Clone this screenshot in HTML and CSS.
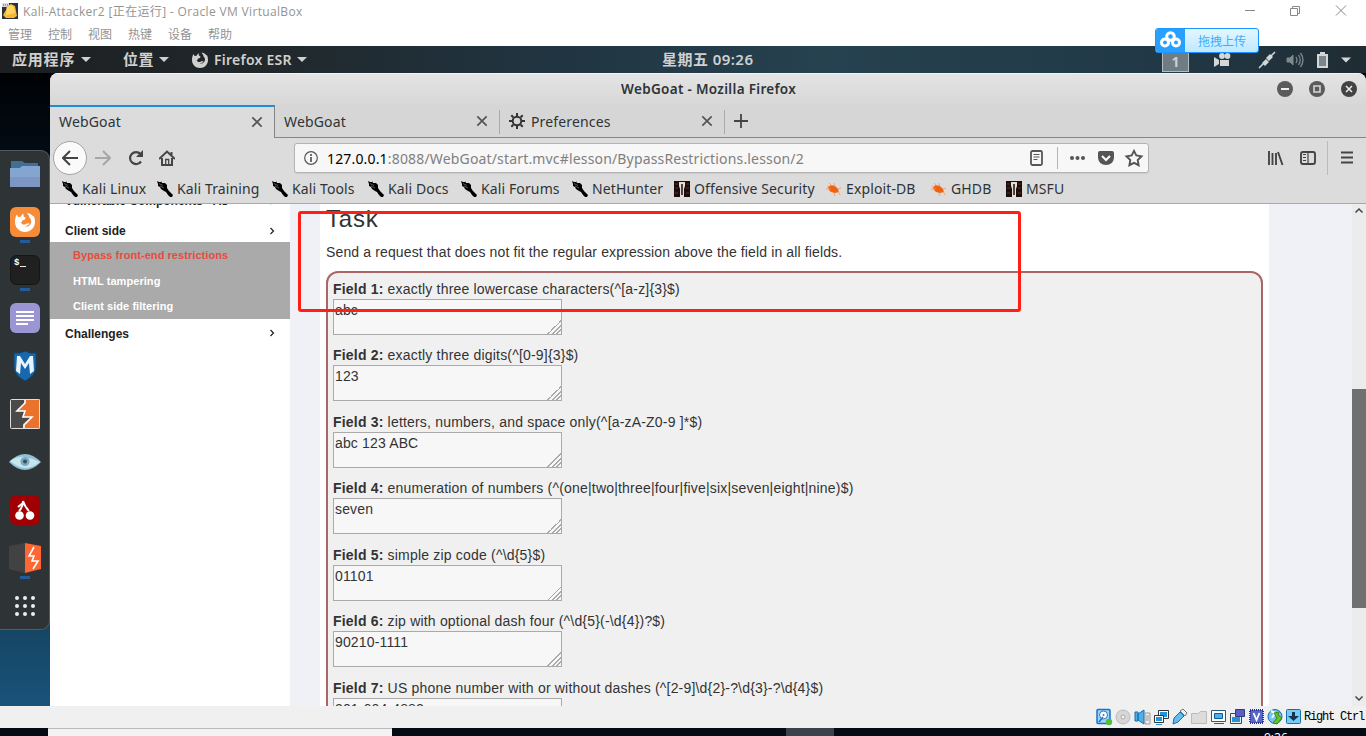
FILE: index.html
```
<!DOCTYPE html>
<html lang="zh-CN">
<head>
<meta charset="utf-8">
<title>Kali-Attacker2 [正在运行] - Oracle VM VirtualBox</title>
<link rel="stylesheet" href="styles.css">
</head>
<body>
<svg class="defs" width="0" height="0">
  <symbol id="dragon" viewBox="0 0 16 16"><path d="M0 0l2 1h2V0l1 2h3l2 2v3l2 3 4 4-1 2h-2l-2-2-2-3-2-1-3-2-1-2-2-1V5L1 3z"/><path d="M2 2.500l4 2M3 5l4 2" stroke="#999" stroke-width=".6"/></symbol>
  <symbol id="offsec" viewBox="0 0 16 16"><path d="M0 0h16v16H0z" fill="#1c0d0d"/><path d="M1 3h3M1 7h3M1 12h3M12 3h3M12 7h3M12 12h3" stroke="#4a2420" stroke-width="1.5"/><path d="M5 1h6v4l-1 3v8H6V8L5 5z" fill="#e6ddd4"/><path d="M8 3v11" stroke="#18100f" stroke-width="1.500"/></symbol>
  <symbol id="bug" viewBox="0 0 16 16"><path d="M2 6l3-2 4 1 3 3 1 3-4 1-4-1-2-2z" fill="#ee6210"/><path d="M0 8l5 0M6 5L3 2M9 6L8 2M12 8l3-1M12 10l2 4M8 12l1 3M1 5l3 1" stroke="#f2985e" stroke-width=".8" fill="none"/></symbol>
  <symbol id="close" viewBox="0 0 12 12"><path d="M2 2l8 8M10 2l-8 8" stroke="#555" stroke-width="1.500" fill="none"/></symbol>
  <symbol id="chev" viewBox="0 0 8 8"><path d="M2.5 1l3 3-3 3" stroke="#222" stroke-width="1.2" fill="none"/></symbol>
  <symbol id="swirl" viewBox="0 0 16 16"><path d="M1.500 2l1 2 2-.3L6.500 1l.5 2.500 1.500 1-.5 1.500-2 .5L5.500 8 4.500 8l1.500 2h2l1.500-.8 2-.2c-.5 2-3 2.500-4.500 2 3 1.500 6-.5 6-3.500 0-1.500-1-3-2-3.500l.5-.7C10.500 2 10 1.500 9.500.5c3 .5 4.500 2 5 3l.5-.5c.7 1.500 1 3.500 1 5 0 4.500-3.500 8-8 8s-8-3.500-8-8c0-2.500.5-4.500 1.500-6z"/></symbol>
</svg>

<header class="host-title">
  <svg class="host-logo" width="16" height="16" viewBox="0 0 16 16"><path d="M0 0h16v16H0z" fill="#293041"/><path d="M0 0h7v4H0z" fill="#d9dde4"/><path d="M1 2h5" stroke="#555" stroke-dasharray="1 1"/><path d="M5 3l4-2 4 2 2 10-3 2H4l-3-3 3-5z" fill="#f7b731"/><path d="M5 4l4-2 3 2 1 6-9 2z" fill="#ffd662"/></svg>
  <span class="host-name">Kali-Attacker2 [正在运行] - Oracle VM VirtualBox</span>
  <svg class="host-controls" width="103" height="14" viewBox="0 0 103 14"><path d="M0 7.500h10M45.500 5.500h7v7h-7zM47.500 5V3.500h7v7H53M91 2.500l10 10M101 2.500l-10 10" fill="none" stroke="#888"/></svg>
</header>
<nav class="host-menu"><span>管理</span><span>控制</span><span>视图</span><span>热键</span><span>设备</span><span>帮助</span></nav>

<div class="upload-badge">
  <svg width="29" height="24" viewBox="0 0 29 24"><path d="M0 0h29v24H0z" fill="#27a0ff"/><g fill="none" stroke="#fff" stroke-width="3"><circle cx="14.500" cy="7.500" r="3.800"/><circle cx="9" cy="13.500" r="3.500"/><circle cx="20" cy="13.500" r="3.500"/></g></svg>
  <span>拖拽上传</span>
</div>

<div class="panel">
  <span class="panel-apps">应用程序</span><i class="down"></i>
  <span class="panel-places">位置</span><i class="down"></i>
  <svg class="panel-fox" width="16" height="16" fill="#d0d0cf"><use href="#swirl"/></svg>
  <span class="panel-ff">Firefox ESR</span><i class="down"></i>
  <span class="panel-clock">星期五 09:26</span>
  <span class="workspace">1</span>
  <svg class="tray" width="140" height="20" viewBox="0 0 140 20" fill="#d3d7d8"><path d="M0 7l5 3v4l-5 3zM6 10h9v6H6z"/><circle cx="8" cy="6" r="2.900"/><circle cx="13.500" cy="6" r="2.900"/><path d="M45 18l7-7M54 9l7-7" stroke="#d3d7d8" stroke-width="1.500"/><path d="M48 13l4-4 3 3-4 4zM52 8l4-4 3 3-4 4z"/><g fill="#7e898e" stroke="#7e898e"><path d="M73 8h3l3-3v10l-3-3h-3z"/><path d="M82 7q2 3 0 6M84.500 5q3.500 5 0 10M86.500 3q5 7 0 14" fill="none" stroke-width="1.300"/></g><path d="M106 2h5v2h3v14h-11V4h3z"/><path d="M105 6h7v10h-7z" fill="#7c868b"/><path d="M127 7.500h10l-5 5z"/></svg>
</div>

<main class="desktop">
  <aside class="dock">
    <div class="app folder"><svg width="30" height="30" viewBox="0 0 30 30"><path d="M1 3h11l3 2h13v5H1z" fill="#3f6f94"/><path d="M0 10h10l2-2h18v21H0z" fill="#85a5d1"/><path d="M0 19h30v10H0z" fill="#7d96c3"/></svg></div>
    <div class="app running"><svg width="30" height="30" viewBox="0 0 30 30"><rect width="30" height="30" rx="6" fill="#f68b38"/><g transform="translate(5 5) scale(1.250)" fill="#fff"><use href="#swirl" width="16" height="16"/></g></svg></div>
    <div class="app running"><svg width="30" height="30" viewBox="0 0 30 30"><rect x=".5" y=".5" width="29" height="29" rx="6" fill="#202020" stroke="#141616"/><path d="M10 11.500h6" stroke="#eee"/><text x="4" y="10" class="prompt">$</text></svg></div>
    <div class="app"><svg width="30" height="30" viewBox="0 0 30 30"><rect width="30" height="30" rx="6" fill="#9c95d4"/><path d="M6 9h18M6 13h18M6 17h18M6 21h12" stroke="#fff" stroke-width="2"/></svg></div>
    <div class="app"><svg width="30" height="30" viewBox="0 0 30 30"><path d="M4 2q6 1 11-2 5 3 11 2v14q0 8-11 14Q4 24 4 16z" fill="#1769af" stroke="#174268"/><path d="M6 20l1-15h3l5 8 5-8h3l1 15-4 3-1-11-4 6-4-6-1 11z" fill="#e7f4ff"/></svg></div>
    <div class="app"><svg width="32" height="32" viewBox="0 0 32 32"><rect x="1.500" y="1.500" width="29" height="29" fill="#4a4a4a"/><path d="M16 1h15v30H14v-5l8-7h-7l1-6H9l7-9z" fill="#eb722b"/><path d="M16 1v4l-8 8h8l-2 6h9l-8 8v4" fill="none" stroke="#fff" stroke-width="1.600"/><rect x="1.500" y="1.500" width="29" height="29" rx="1" fill="none" stroke="#ddd"/></svg></div>
    <div class="app"><svg width="32" height="18" viewBox="0 0 32 18"><path d="M0 9Q8 1 16 1t16 8q-8 8-16 8T0 9z" fill="#8fc0d6"/><path d="M1 8Q9 3 16 4t15 5q-8 6-15 6T1 8z" fill="#c8e4ec"/><circle cx="16" cy="8.500" r="4.500" fill="#7aa9c0"/><circle cx="16" cy="8.500" r="2" fill="#38505e"/></svg></div>
    <div class="app"><svg width="30" height="30" viewBox="0 0 30 30"><rect width="30" height="30" rx="6" fill="#a00004"/><path d="M13 6q0 6-4 10M13 6q2 6 6 10M8 12l5-4" stroke="#fff" stroke-width="2" fill="none"/><circle cx="9.500" cy="20.500" r="4.300" fill="#fff"/><circle cx="20" cy="20.500" r="4.300" fill="#fff"/></svg></div>
    <div class="app running"><svg width="32" height="32" viewBox="0 0 32 32"><path d="M0 4l16-3v30L0 27z" fill="#424242"/><path d="M16 1l16 3v23l-16 4z" fill="#ff6633"/><path d="M25 5l-5 9h5l-2 5h6l-5 8" fill="none" stroke="#fff" stroke-width="1.600"/></svg></div>
    <div class="app"><svg width="22" height="22" viewBox="0 0 22 22" fill="#eee"><circle cx="3" cy="3" r="2"/><circle cx="11" cy="3" r="2"/><circle cx="19" cy="3" r="2"/><circle cx="3" cy="11" r="2"/><circle cx="11" cy="11" r="2"/><circle cx="19" cy="11" r="2"/><circle cx="3" cy="19" r="2"/><circle cx="11" cy="19" r="2"/><circle cx="19" cy="19" r="2"/></svg></div>
  </aside>

  <section class="browser">
    <div class="window-title">
      <span>WebGoat - Mozilla Firefox</span>
      <svg class="window-buttons" width="80" height="16" viewBox="0 0 80 16"><circle cx="8" cy="8" r="8" fill="#5b5b5b"/><circle cx="40" cy="8" r="8" fill="#5b5b5b"/><circle cx="72" cy="8" r="8" fill="#434343"/><path d="M4 8h8" stroke="#eee" stroke-width="2"/><path d="M37 5h6v6h-6z" stroke="#d7d7d7" stroke-width="1.600" fill="none"/><path d="M69 5l6 6M75 5l-6 6" stroke="#eee" stroke-width="1.500"/></svg>
    </div>
    <div class="tabs">
      <div class="tab active"><span>WebGoat</span><svg width="14" height="14"><use href="#close"/></svg></div>
      <div class="tab"><span>WebGoat</span><svg width="14" height="14"><use href="#close"/></svg></div>
      <div class="tab prefs"><svg width="16" height="16" viewBox="0 0 16 16"><circle cx="8" cy="8" r="4.300" fill="none" stroke="#333" stroke-width="2"/><path d="M8 0v3M8 13v3M0 8h3M13 8h3M2.300 2.300l2 2M11.700 11.700l2 2M13.700 2.300l-2 2M4.300 11.700l-2 2" stroke="#333" stroke-width="2"/></svg><span>Preferences</span><svg width="14" height="14"><use href="#close"/></svg></div>
      <div class="new-tab"><svg width="14" height="14" viewBox="0 0 14 14"><path d="M7 0v14M0 7h14" stroke="#444" stroke-width="1.800"/></svg></div>
    </div>
    <div class="toolbar">
      <span class="back"><svg width="16" height="16" viewBox="0 0 16 16"><path d="M16 8H1M8 1L1 8l7 7" fill="none" stroke="#444" stroke-width="2"/></svg></span>
      <svg class="forward" width="16" height="16" viewBox="0 0 16 16"><path d="M0 8h15M8 1l7 7-7 7" fill="none" stroke="#a6a6a6" stroke-width="2"/></svg>
      <svg class="reload" width="16" height="16" viewBox="0 0 16 16"><path d="M12.500 4A6 6 0 1 0 13 11.500" fill="none" stroke="#444" stroke-width="2.200"/><path d="M15 0v7H8z" fill="#444"/></svg>
      <svg class="home" width="16" height="16" viewBox="0 0 16 16"><path d="M0 9l8-7.500L16 9M3 8v7h10V8M12.500 5V2" fill="none" stroke="#444" stroke-width="2"/><path d="M6.700 15V9.500h3V15" fill="none" stroke="#444" stroke-width="1.300"/></svg>
      <div class="url">
        <svg width="14" height="14" viewBox="0 0 14 14"><circle cx="7" cy="7" r="6.300" fill="none" stroke="#555" stroke-width="1.200"/><path d="M7 6v5M7 3v2" stroke="#555" stroke-width="1.700"/></svg>
        <span class="address"><b>127.0.0.1</b>:8088/WebGoat/start.mvc#lesson/BypassRestrictions.lesson/2</span>
        <svg class="url-actions" width="120" height="26" viewBox="0 0 120 26"><rect x="2" y="6" width="11" height="14" rx="1.500" fill="none" stroke="#555" stroke-width="1.800"/><path d="M4.500 9.500h6M4.500 12h6M4.500 14.500h4" stroke="#555"/><path d="M28.500 2v22" stroke="#b5b5b5"/><g fill="#555"><circle cx="43" cy="13" r="2"/><circle cx="48.500" cy="13" r="2"/><circle cx="54" cy="13" r="2"/></g><path d="M69 8q0-2 2-2h12q2 0 2 2v5q-1 7-8 7t-8-7z" fill="#555"/><path d="M73 11l4 4 4-4" fill="none" stroke="#fff" stroke-width="2"/><path d="M105 5.800l2.300 4.700 5.200.8-3.800 3.700.9 5.200-4.600-2.400-4.600 2.400.9-5.200-3.800-3.700 5.200-.8z" fill="none" stroke="#555" stroke-width="1.900"/></svg>
      </div>
      <svg class="tool-icons" width="86" height="34" viewBox="0 0 86 34"><path d="M2 10v14M5.500 12v12M9 12v12M11 11l4.500 13" stroke="#444" stroke-width="1.900"/><rect x="34" y="11" width="14" height="12" rx="2" fill="none" stroke="#444" stroke-width="1.900"/><path d="M41 11v12M36 13.500h3M36 16.500h3M36 19.500h3" stroke="#444" stroke-width="1.200"/><path d="M60.500 0v34" stroke="#bbb"/><path d="M74 11.500h12M74 16.500h12M74 21.500h12" stroke="#444" stroke-width="2"/></svg>
    </div>
    <div class="bookmarks">
      <span><svg><use href="#dragon"/></svg>Kali Linux</span><span><svg><use href="#dragon"/></svg>Kali Training</span><span><svg><use href="#dragon"/></svg>Kali Tools</span><span><svg><use href="#dragon"/></svg>Kali Docs</span><span><svg><use href="#dragon"/></svg>Kali Forums</span><span><svg><use href="#dragon"/></svg>NetHunter</span><span><svg><use href="#offsec"/></svg>Offensive Security</span><span><svg><use href="#bug"/></svg>Exploit-DB</span><span><svg><use href="#bug"/></svg>GHDB</span><span><svg><use href="#offsec"/></svg>MSFU</span>
    </div>
    <div class="page">
      <nav class="lessons">
        <div class="category vulnerable"><span>Vulnerable Components - A8</span><svg width="8" height="8"><use href="#chev"/></svg></div>
        <div class="category client"><span>Client side</span><svg width="8" height="8"><use href="#chev"/></svg></div>
        <ul><li class="selected">Bypass front-end restrictions</li><li>HTML tampering</li><li>Client side filtering</li></ul>
        <div class="category challenges"><span>Challenges</span><svg width="8" height="8"><use href="#chev"/></svg></div>
      </nav>
      <article class="lesson">
        <h2>Task</h2>
        <p>Send a request that does not fit the regular expression above the field in all fields.</p>
        <form class="fields">
          <div class="field"><label><b>Field 1:</b> exactly three lowercase characters(^[a-z]{3}$)</label><div class="box">abc</div></div>
          <div class="field"><label><b>Field 2:</b> exactly three digits(^[0-9]{3}$)</label><div class="box">123</div></div>
          <div class="field"><label><b>Field 3:</b> letters, numbers, and space only(^[a-zA-Z0-9 ]*$)</label><div class="box">abc 123 ABC</div></div>
          <div class="field"><label><b>Field 4:</b> enumeration of numbers (^(one|two|three|four|five|six|seven|eight|nine)$)</label><div class="box">seven</div></div>
          <div class="field"><label><b>Field 5:</b> simple zip code (^\d{5}$)</label><div class="box">01101</div></div>
          <div class="field"><label><b>Field 6:</b> zip with optional dash four (^\d{5}(-\d{4})?$)</label><div class="box">90210-1111</div></div>
          <div class="field"><label><b>Field 7:</b> US phone number with or without dashes (^[2-9]\d{2}-?\d{3}-?\d{4}$)</label><div class="box">301-604-4882</div></div>
        </form>
      </article>
      <div class="scrollbar"><svg width="14" height="14" viewBox="0 0 14 14"><path d="M3.500 8.500L7 5l3.500 3.500" fill="none" stroke="#444" stroke-width="1.500"/></svg><div class="thumb"></div><svg width="14" height="14" viewBox="0 0 14 14"><path d="M3.500 4.500L7 8l3.500-3.500" fill="none" stroke="#444" stroke-width="1.500"/></svg></div>
      <div class="annotation"></div>
    </div>
  </section>
</main>

<footer class="status">
  <svg width="208" height="18" viewBox="0 0 208 18">
    <rect x="1" y="1.500" width="13" height="14" rx="1" fill="#9fd4fa" stroke="#1670cc" stroke-width="1.500"/><circle cx="7.500" cy="7" r="4" fill="#fff" stroke="#327cbd"/><circle cx="7.500" cy="7" r="1" fill="#327cbd"/><path d="M3 14l4-5" stroke="#1670cc" stroke-width="1.500"/><circle cx="13" cy="14" r="3.200" fill="#55bf38"/>
    <circle cx="27" cy="9" r="7" fill="#d6d6d6" stroke="#bbb"/><circle cx="27" cy="9" r="2" fill="#f2f2f2" stroke="#aaa"/>
    <path d="M39 4h3v9h-3zM42 6l6-4v14l-6-4z" fill="#4eb0e8" stroke="#176fad"/><path d="M49 5h5v11h-5zM50 8h3M50 10h3M50 12h3" fill="#eee" stroke="#999"/>
    <path d="M62.500 2.500h10v8h-10z" fill="#fff" stroke="#333"/><path d="M64 4h7v5h-7z" fill="#2493dd"/><path d="M58.500 7.500h9v7h-9z" fill="#fff" stroke="#333"/><path d="M60 9h6v4h-6zM60 16h6v1h-6z" fill="#2493dd"/>
    <path d="M77 16l1-6 6-6 4 4-6 6z" fill="#63beee" stroke="#176fad"/><path d="M84 3l3-2 4 4-2 3z" fill="#eee" stroke="#777"/>
    <path d="M95.500 5.500h7l2-2h6v12h-15z" fill="#dcdcdc" stroke="#bbb"/>
    <path d="M115.500 2.500h14v11h-14z" fill="#fff" stroke="#305a78"/><path d="M118.500 5.500h8v5h-8z" fill="#4ab1ee" stroke="#085c9b"/><path d="M118 15.500h10" stroke="#555"/>
    <path d="M134.500 5.500h11v10h-11z" fill="#eee" stroke="#444"/><path d="M136 9h8v5h-8z" fill="#2493dd"/><path d="M139.500 1.500h9v7h-9z" fill="#5b5ec6" stroke="#353781"/>
    <rect x="154" y="2" width="13" height="13" fill="#5866c6" stroke="#263398" stroke-dasharray="1 1" stroke-width="2"/><path d="M157.500 5l3 7 3-7" fill="none" stroke="#fff" stroke-width="1.800"/>
    <circle cx="179" cy="8.500" r="7" fill="#72c3f0" stroke="#176fad"/><path d="M175 3l4 2-3 5" stroke="#fff" fill="none" stroke-width="2"/><path d="M178 5l5-1-1 3 4 3-5 6-4-1 4-5z" fill="#67c42b" stroke="#388418"/>
    <rect x="190.500" y="1.500" width="14" height="14" rx="1" fill="#79cbf6" stroke="#176fad"/><path d="M196 4h3v4h4l-5.500 5L192 8h4z" fill="#143456"/>
  </svg>
  <span>Right Ctrl</span>
</footer>
<div class="taskbar"><div class="task-search"></div><div class="task-active"></div><span class="task-clock">9:26</span></div>
</body>
</html>
```
FILE: styles.css
```
* { box-sizing: border-box; }
body { margin: 0; width: 1366px; height: 736px; overflow: hidden; display: flex; flex-direction: column; position: relative; background: #fff; font-family: "Noto Sans", "Noto Sans CJK SC", sans-serif; white-space: nowrap; }
.defs { position: absolute; }
svg { flex: none; display: block; }
.host-title { height: 23px; flex: none; display: flex; align-items: center; padding: 0 18px 0 2px; color: #949494; font: 12px/16px "Open Sans", "Noto Sans CJK SC", sans-serif; }
.host-logo { margin-top: -2px; }
.host-name { margin-left: 5px; letter-spacing: .34px; }
.host-controls { margin: -4px 0 0 auto; }
.host-menu { height: 23px; flex: none; display: grid; grid-template-columns: repeat(6, 40px); padding-left: 8px; color: #939393; font: 12px/22px "Noto Sans CJK SC", sans-serif; }
.upload-badge { position: absolute; z-index: 5; left: 1155px; top: 28px; width: 104px; height: 25px; display: flex; align-items: center; border: 1px solid #1b95ff; border-radius: 3px; overflow: hidden; background: linear-gradient(#e4f7ff, #bfe8ff); color: #41adf8; font: 12px/24px "Noto Sans CJK SC", sans-serif; }
.upload-badge span { margin-left: 13px; }
.panel { height: 27px; flex: none; display: flex; align-items: center; background: linear-gradient(90deg, #1d1f20 0%, #20282c 20%, #20333f 38%, #26414f 60%, #213947 85%, #202c33 100%); color: #d0d0cf; font: bold 14px/27px "Noto Sans", "Noto Sans CJK SC", sans-serif; }
.down { border: 5px solid transparent; border-top-color: #d0d0cf; border-bottom: 0; }
.panel-apps { width: 69px; padding-left: 12px; box-sizing: content-box; font-size: 15px; letter-spacing: .8px; }
.panel-places { width: 36px; margin-left: 32px; font-size: 15px; letter-spacing: .5px; }
.panel-fox { margin-left: 23px; }
.panel-ff { width: 83px; margin-left: 6px; font-weight: 600; letter-spacing: .25px; }
.panel-clock { width: 92px; margin-left: 355px; font-size: 15px; font-weight: 600; letter-spacing: .45px; }
.workspace { width: 27px; height: 24px; margin-left: 408px; border: 1px solid #b5bdc0; background: #6f7c83; text-align: center; line-height: 26px; }
.tray { margin-left: 25px; }
.desktop { height: 633px; flex: none; display: flex; background: linear-gradient(180deg, #000205 0, #020b14 77px, #164665 560px, #1a527a 633px); }
.dock { width: 50px; height: 480px; flex: none; margin-top: 77px; background: #2e3436; border: 1px solid #565a5c; border-left: 0; border-radius: 0 9px 9px 0; }
.app { height: 48px; display: flex; align-items: center; justify-content: center; position: relative; margin-top: -1px; margin-bottom: 1px; }
.folder { padding-bottom: 2px; }
.running::after { content: ""; position: absolute; left: 20px; bottom: 3px; width: 10px; height: 3px; background: #215d9c; }
.prompt { font: bold 9px "Liberation Mono", monospace; fill: #fff; }
.browser { width: 1316px; display: flex; flex-direction: column; overflow: hidden; border-radius: 8px 8px 0 0; background: #dcdcdc; color: #2e3436; font-size: 14px; }
.window-title { height: 32px; flex: none; display: flex; align-items: center; border-top: 1px solid #f4f4f4; background: linear-gradient(#e4e4e4, #d7d7d7); padding: 0 9px 1px 0; font-size: 13.500px; font-weight: 600; letter-spacing: .32px; }
.window-title span { width: 185px; margin-left: 571px; }
.window-buttons { margin-left: auto; }
.tabs { height: 33px; flex: none; display: flex; background: #d6d6d6; letter-spacing: .15px; }
.tab { width: 225px; height: 33px; display: flex; align-items: center; padding: 0 11px 0 9px; border-bottom: 1px solid #858787; position: relative; }
.tab > svg:last-child { margin-left: auto; }
.tab.active { border-top: 2px solid #1d8ed2; border-right: 1px solid #858787; border-bottom: 0; background: #dcdcdc; padding: 0 10px 2px 9px; }
.tab:nth-child(2)::after, .prefs::after { content: ""; position: absolute; right: 0; top: 5px; height: 24px; width: 1px; background: #aaa; }
.prefs span { margin-left: 6px; }
.new-tab { flex: 1; padding: 9px; border-bottom: 1px solid #858787; }
.toolbar { height: 41px; flex: none; display: flex; align-items: center; padding: 0 13px 1px 3px; }
.back { width: 34px; height: 34px; display: flex; align-items: center; justify-content: center; border: 1px solid #a3a3a3; border-radius: 50%; background: #fafafa; }
.forward { margin-left: 8px; }
.reload { margin-left: 17px; }
.home { margin-left: 15px; }
.url { width: 855px; height: 30px; margin-left: 119px; display: flex; align-items: center; padding: 0 0 0 9px; border: 1px solid #b3b3b3; border-radius: 3px; background: #f7f7f7; box-shadow: 0 1px 1px #ccc; }
.address { margin-left: 9px; color: #808080; letter-spacing: .165px; }
.address b { color: #000; font-weight: normal; }
.url-actions { margin-left: auto; margin-right: -1px; }
.tool-icons { margin-left: auto; }
.bookmarks { height: 25px; flex: none; display: grid; grid-template-columns: 95px 115px 96px 93px 111px 102px 152px 105px 75px auto; padding: 0 0 4px 12px; border-bottom: 1px solid #a9a9a9; line-height: 20px; letter-spacing: .12px; }
.bookmarks span { display: flex; align-items: center; }
.bookmarks svg { width: 16px; height: 16px; margin-right: 4px; }
.page { height: 502px; flex: none; display: flex; position: relative; overflow: hidden; background: #eff1f7; font: 14px/20px "Liberation Sans", Arial, sans-serif; color: #333; }
.lessons { width: 240px; background: #fff; font-weight: bold; font-size: 12px; color: #222; }
.category { display: flex; align-items: center; justify-content: space-between; padding: 0 14px 0 15px; }
.vulnerable { height: 18px; margin-top: -12px; }
.client { height: 32px; padding-top: 10px; }
.client svg, .challenges svg { margin-top: -1px; }
.lessons ul { height: 77px; margin: 0; padding: 1px 0 0 23px; list-style: none; background: #aaa; color: #fff; font-size: 11px; line-height: 25.500px; letter-spacing: .06px; }
.lessons .selected { color: #e84c3d; }
.challenges { height: 29px; }
.lesson { width: 949px; margin-left: 30px; padding: 0 6px; background: #fff; }
.lesson h2 { height: 38px; margin: 0; font-size: 24px; font-weight: normal; line-height: 30px; letter-spacing: .8px; }
.lesson p { height: 29px; margin: 0; letter-spacing: .13px; }
.fields { height: 500px; margin: 0; padding: 6px 5px; border: 2px solid #a66; border-radius: 12px; background: #f0f0f0; }
.field { height: 66.450px; }
.field label { display: block; height: 20px; letter-spacing: .19px; }
.box { width: 229px; height: 36px; padding: 1px; border: 1px solid #aaa; line-height: 18px; letter-spacing: .15px; background: linear-gradient(135deg, transparent 50%, #aaa 50% 57%, transparent 57% 66%, #aaa 66% 73%, transparent 73% 81%, #aaa 81% 88%, transparent 88%) right bottom / 14px 14px no-repeat #f7f7f7; }
.scrollbar { width: 14px; height: 502px; margin-left: auto; display: flex; flex-direction: column; background: #ececec; }
.thumb { height: 219px; margin-top: 171px; margin-bottom: auto; background: #707070; }
.annotation { position: absolute; left: 248px; top: 7px; width: 723px; height: 101px; border: 3px solid #ff1f14; border-radius: 3px; }
.status { height: 22px; flex: none; display: flex; align-items: center; padding-left: 1096px; background: #f0f0f0; color: #000; font: 12px/20px "Liberation Mono", monospace; }
.status span { letter-spacing: -1.200px; }
.taskbar { height: 8px; flex: none; display: flex; overflow: hidden; background: #050b14; }
.task-search { width: 344px; margin-left: 48px; background: #f3f3f3; border-top: 1px solid #bbb; }
.task-active { width: 48px; margin-left: 394px; background: #3b424b; }
.task-clock { margin-left: 430px; color: #fff; font: 12px/20px "Open Sans", sans-serif; }
```
